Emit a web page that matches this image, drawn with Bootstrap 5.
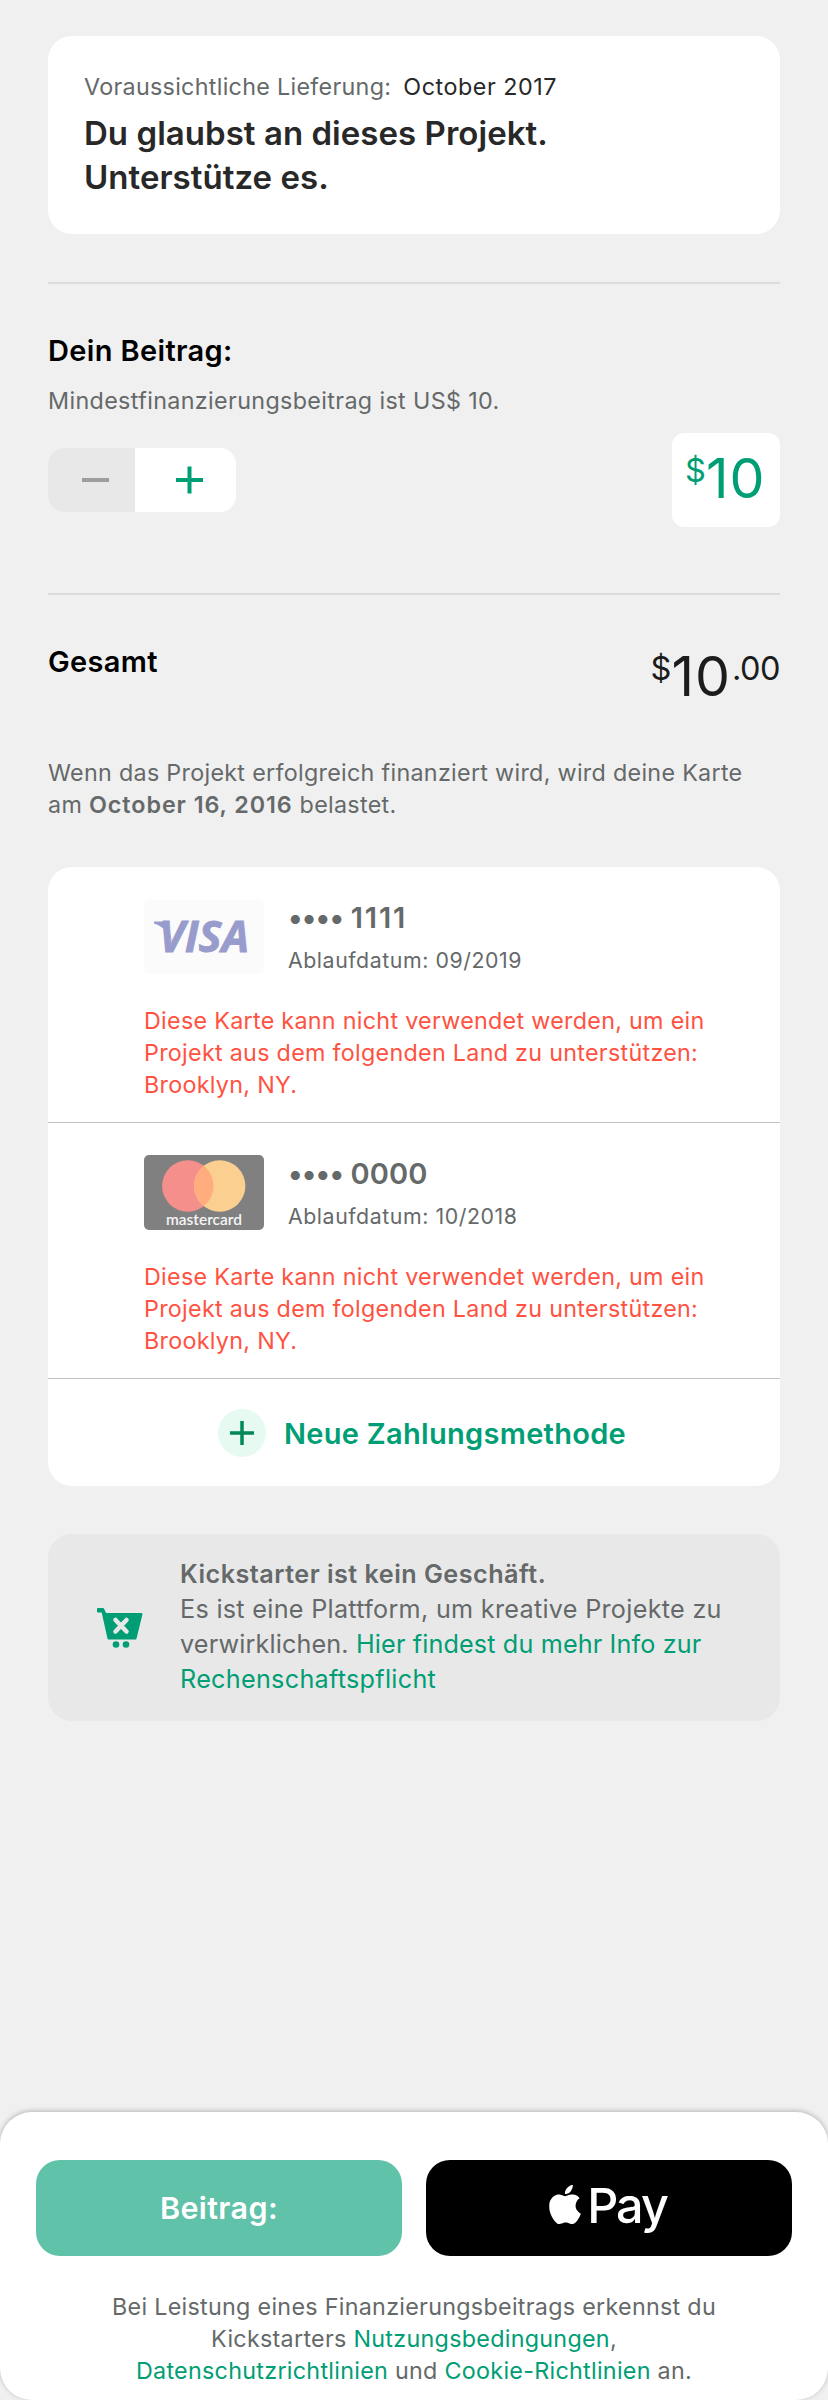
<!DOCTYPE html>
<html lang="de">
<head>
<meta charset="utf-8">
<meta name="viewport" content="width=device-width, initial-scale=1">
<title>Beitrag</title>
<link href="https://cdn.jsdelivr.net/npm/bootstrap@5.3.0/dist/css/bootstrap.min.css" rel="stylesheet">
<style>
body{background:#f0f0f0;font-family:Inter,"Liberation Sans",sans-serif;color:#000;font-size:23.3px;line-height:32px;letter-spacing:.3px;height:2400px;overflow:hidden}
a,a:hover{color:#009e74;text-decoration:none}
svg{display:block;flex:none}
.page{padding:36px 48px 0}
.panel{background:#fff;border-radius:24px;overflow:hidden}
.muted{color:#656969}
.ink{color:#282828}
.intro{padding:35px 36px 0;height:198px}
.intro h1{font-size:33px;line-height:44px;font-weight:600;margin:8px 0 0;letter-spacing:.04px}
.delivery{margin-left:12px;letter-spacing:.55px}
.rule{height:2px;background:#dcdcdc;margin-top:48px}
.rule.low{margin-top:66px}
.block{margin-top:48px}
.label{font-size:29px;line-height:36px;font-weight:600;margin:0;padding-top:1px;letter-spacing:.35px}
.hint{margin:16px 0 16px;letter-spacing:.36px}
.stepper{width:188px;height:64px;border-radius:16px;overflow:hidden;background:#fff}
.stepper button{border:0;background:none;padding:0}
.stepper .minus{width:87px;background:#e8e8e8;padding-left:34px}
.stepper .plus{padding-left:41px}
.amount{width:108px;height:94px;border-radius:12px;background:#fff;color:#009e74;padding:18px 0 0 13px}
.big{font-size:55.5px;line-height:54px;letter-spacing:.9px}
.sup{font-size:32.5px;line-height:32px;margin-top:4px;letter-spacing:0}
.dollar{width:21px}
.cents{letter-spacing:-.5px;margin-left:1px}
.total{height:114px}
.sum{color:#1c1c1c;margin-top:6px}
.charge b{letter-spacing:.95px}
.method{height:256px;padding:33px 48px 0 96px;border-bottom:1px solid #c0c0c0}
.method + .method{padding-top:32px}
.num{font-size:29px;line-height:36px;font-weight:600;letter-spacing:.1px}
.dots{letter-spacing:-.8px}
.ones{letter-spacing:1.9px}
.second .num{padding-top:1px}
.exp{font-size:21.3px;line-height:28px;margin-top:10px;letter-spacing:.57px}
.second .exp{margin-top:10px}
.err{color:#ff5242;margin-top:31px;letter-spacing:.29px}
.add{height:107px;font-size:29px;line-height:36px;font-weight:600;letter-spacing:.3px;padding-left:16px;gap:18px}
.add span{padding-top:2px}
.info{background:#e8e8e8;border-radius:24px;height:187px;font-size:25.2px;line-height:35px;padding:23px 0 0 48px;letter-spacing:.29px}
.info b{letter-spacing:.48px}
.info .tight{letter-spacing:.14px}
.info p{margin:0 0 0 35px}
.foot{height:288px;background:#fff;border-radius:32px;box-shadow:0 -1px 5px rgba(0,0,0,.25);padding:48px 36px 0;letter-spacing:.29px}
.act,.act:hover{height:96px;border-radius:24px;border:0;font-size:30.5px;font-weight:600;letter-spacing:.4px;color:#fff}
.act.main{background:#5fc2a9}
.act.apple{background:#000}
.paytext{font-size:48.5px;font-weight:500;line-height:50px;letter-spacing:-2px;margin-top:-5px}
.terms{margin:35px 0 0}
</style>
</head>
<body class="d-flex flex-column">
<main class="page">
<section class="panel intro">
<div><span class="muted">Voraussichtliche Lieferung:</span><span class="ink delivery">October 2017</span></div>
<h1 class="ink">Du glaubst an dieses Projekt.<br>Unterstütze es.</h1>
</section>
<div class="rule"></div>
<section class="block">
<h2 class="label">Dein Beitrag:</h2>
<p class="muted hint">Mindestfinanzierungsbeitrag ist US$ 10.</p>
<div class="d-flex justify-content-between align-items-center">
<div class="stepper d-flex">
<button class="minus d-flex align-items-center" aria-label="Weniger"><svg width="27" height="28"><path d="M0 14h27" stroke="#9b9e9e" stroke-width="4"/></svg></button>
<button class="plus d-flex align-items-center" aria-label="Mehr"><svg width="27" height="28"><path d="M0 14h27M13.5 .5v27" stroke="#009e74" stroke-width="4"/></svg></button>
</div>
<div class="amount d-flex align-items-start"><span class="sup dollar">$</span><span class="big">10</span></div>
</div>
</section>
<div class="rule low"></div>
<section class="block total d-flex justify-content-between align-items-start">
<h2 class="label">Gesamt</h2>
<div class="sum d-flex align-items-start"><span class="sup dollar">$</span><span class="big">10</span><span class="sup cents">.00</span></div>
</section>
<p class="muted charge mb-0">Wenn das Projekt erfolgreich finanziert wird, wird deine Karte<br>am <b class="fw-semibold">October 16, 2016</b> belastet.</p>
<section class="panel" style="margin-top:46px">
<div class="method">
<div class="d-flex">
<svg width="120" height="74"><rect width="120" height="74" rx="5" fill="#fbfbfb"/><path d="M10 21.500h13l6 24c-3-12-8-18-19-22z" fill="#989ccc"/><text x="15" y="52" font-family="Open Sans,sans-serif" font-weight="700" font-style="italic" font-size="42.500" textLength="90" lengthAdjust="spacingAndGlyphs" fill="#989ccc" stroke="#989ccc" stroke-width=".8" letter-spacing="0">VISA</text></svg>
<div class="muted ms-4"><div class="num"><span class="dots">••••</span> <span class="ones">1111</span></div><div class="exp">Ablaufdatum: 09/2019</div></div>
</div>
<div class="err">Diese Karte kann nicht verwendet werden, um ein<br>Projekt aus dem folgenden Land zu unterstützen:<br>Brooklyn, NY.</div>
</div>
<div class="method second">
<div class="d-flex">
<svg width="120" height="75"><rect width="120" height="75" rx="5" fill="#808080"/><circle cx="43.800" cy="31" r="25.700" fill="#f58f8b"/><circle cx="75.700" cy="31" r="25.700" fill="#fbcf8f"/><path d="M59.750 10.850a25.700 25.700 0 0 1 0 40.300a25.700 25.700 0 0 1 0-40.300z" fill="#ffad7e"/><text x="22" y="70" font-family="Lato,sans-serif" font-weight="600" font-size="15.500" textLength="76" lengthAdjust="spacingAndGlyphs" fill="#f5f5f5" letter-spacing="0">mastercard</text></svg>
<div class="muted ms-4"><div class="num"><span class="dots">••••</span> 0000</div><div class="exp">Ablaufdatum: 10/2018</div></div>
</div>
<div class="err">Diese Karte kann nicht verwendet werden, um ein<br>Projekt aus dem folgenden Land zu unterstützen:<br>Brooklyn, NY.</div>
</div>
<a href="#" class="add d-flex align-items-center justify-content-center">
<svg width="48" height="48"><circle cx="24" cy="24" r="24" fill="#e6faf1"/><path d="M12 24h24M24 12v24" stroke="#028858" stroke-width="3.500"/></svg>
<span>Neue Zahlungsmethode</span></a>
</section>
<section class="info d-flex block">
<svg width="49" height="42" viewBox="0 0 49 42" style="margin-top:50px"><path d="M2 2h5l2.500 5h36L39.500 31.500H12.500L6.500 4.500H2z" fill="#009e74" stroke="#009e74" stroke-width="2" stroke-linejoin="round"/><path d="M19.500 13l11 11.500M30.500 13l-11 11.500" stroke="#e8e8e8" stroke-width="4.500" stroke-linecap="round"/><circle cx="20" cy="37.500" r="3.300" fill="#009e74"/><circle cx="30" cy="37.500" r="3.300" fill="#009e74"/></svg>
<p class="muted"><b class="fw-semibold">Kickstarter ist kein Geschäft.</b><br>Es ist eine Plattform, um kreative Projekte zu<br><span class="tight">verwirklichen. <a href="#">Hier findest du mehr Info zur</a></span><br><a href="#">Rechenschaftspflicht</a></p>
</section>
</main>
<footer class="foot mt-auto text-center flex-shrink-0">
<div class="d-flex gap-4">
<button class="btn act main flex-fill w-50">Beitrag:</button>
<button class="btn act apple flex-fill w-50 d-flex align-items-center justify-content-center"><svg width="32" height="39" viewBox="1.400 0 13.200 16" preserveAspectRatio="none" fill="#fff" style="margin:-8px 6px 0 -2px"><path d="M11.182.008C11.148-.03 9.923.023 8.857 1.18c-1.066 1.156-.902 2.482-.878 2.516s1.520.087 2.475-1.258.762-2.391.728-2.430m3.314 11.733c-.048-.096-2.325-1.234-2.113-3.422s1.675-2.789 1.698-2.854-.597-.790-1.254-1.157a3.700 3.700 0 0 0-1.563-.434c-.108-.003-.483-.095-1.254.116-.508.139-1.653.589-1.968.607-.316.018-1.256-.522-2.267-.665-.647-.125-1.333.131-1.824.328-.490.196-1.422.754-2.074 2.237-.652 1.482-.311 3.830-.067 4.560s.625 1.924 1.273 2.796c.576.984 1.340 1.667 1.659 1.899s1.219.386 1.843.067c.502-.308 1.408-.485 1.766-.472.357.013 1.061.154 1.782.539.571.197 1.111.115 1.652-.105.541-.221 1.324-1.059 2.238-2.758q.520-1.185.473-1.282"/></svg><span class="paytext">Pay</span></button>
</div>
<p class="muted terms">Bei Leistung eines Finanzierungsbeitrags erkennst du<br>Kickstarters <a href="#">Nutzungsbedingungen</a>,<br><a href="#">Datenschutzrichtlinien</a> und <a href="#">Cookie-Richtlinien</a> an.</p>
</footer>
<script src="https://cdn.jsdelivr.net/npm/bootstrap@5.3.0/dist/js/bootstrap.bundle.min.js"></script>
</body>
</html>
